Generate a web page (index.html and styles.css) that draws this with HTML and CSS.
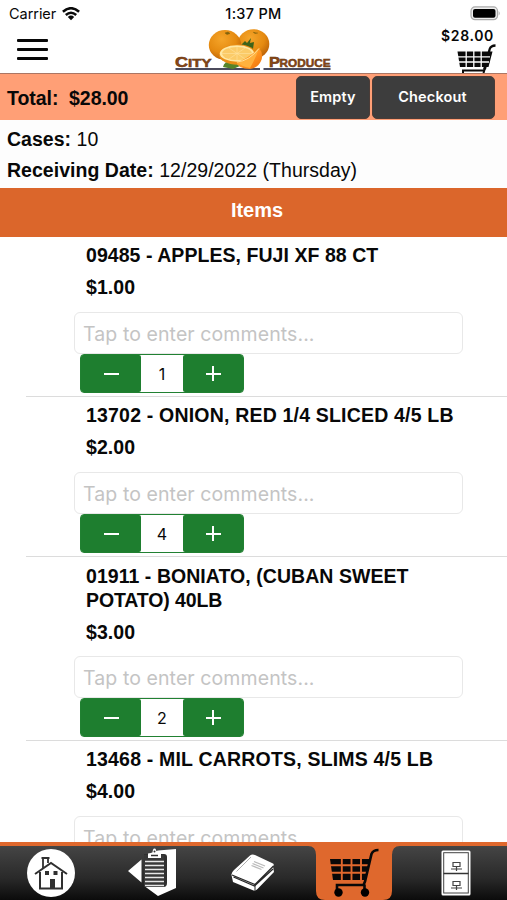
FILE: index.html
```html
<!DOCTYPE html>
<html lang="en">
<head>
<meta charset="utf-8">
<title>City Produce - Cart</title>
<link rel="stylesheet" href="styles.css">
</head>
<body>
<div class="app">
  <div class="status">
    <div class="carrier"><span>Carrier</span>
      <svg width="18" height="14" viewBox="0 0 18 14"><g fill="none" stroke="#0a0a0a" stroke-width="2.5"><path d="M.9 4.8Q9-2.4 17.100 4.800"/><path d="M3.800 8Q9 3.400 14.200 8"/></g><path d="M5.800 10Q9 7.200 12.200 10L9 13.300z" fill="#0a0a0a"/></svg>
    </div>
    <div class="clock">1:37 PM</div>
    <svg class="battery" width="31" height="15" viewBox="0 0 31 15"><rect x="1" y=".9" width="26.500" height="12.800" rx="4" fill="#eee" stroke="#aaa" stroke-width="1.200"/><rect x="3" y="3" width="22.500" height="8.800" rx="2" fill="#000"/><path d="M28.700 5q2 2.300 0 4.600z" fill="#aaa"/></svg>
  </div>
  <header class="header">
    <div class="menu"><i></i><i></i><i></i></div>
    <svg class="logo" width="160" height="46" viewBox="173 27 160 46">
      <defs>
        <radialGradient id="peel" cx=".4" cy=".3" r=".75"><stop offset="0" stop-color="#f5a52a"/><stop offset=".6" stop-color="#e58a10"/><stop offset="1" stop-color="#b65d08"/></radialGradient>
        <linearGradient id="wedge" x1="0" y1="0" x2="1" y2="1"><stop offset="0" stop-color="#ffbd45"/><stop offset=".55" stop-color="#ff9421"/><stop offset="1" stop-color="#ee6f08"/></linearGradient>
      </defs>
      <path d="M175.500 69H260M263.500 69H330.500" stroke="#4b4b5c" stroke-width="1.900"/>
      <ellipse cx="253.500" cy="44" rx="15.800" ry="14.800" fill="url(#peel)"/>
      <ellipse cx="225" cy="45" rx="16.200" ry="15" fill="url(#peel)"/>
      <path d="M225 33l3-1 2 1.500-3 1zM253 32l2 1.500 3-.5" fill="#80620d" stroke="#80620d" stroke-width=".5"/>
      <path d="M242 44l3-3 2 2 4-5-1 5 4-1-1 7-5 4-9-5z" fill="#3e631a"/>
      <path d="M223 67q1-6 9-6l8 5-7 3z" fill="#55842b"/>
      <ellipse cx="237.500" cy="54.500" rx="18.500" ry="10.300" fill="#e98d15"/>
      <ellipse cx="237" cy="53.500" rx="17.200" ry="8.300" fill="#ffe8a4"/>
      <ellipse cx="237" cy="53.500" rx="14.900" ry="6.600" fill="#fbcb68"/>
      <path d="M222 53.500h30M229 48l16 11M245 48l-16 11M237 47v13" stroke="#ffe3a0" stroke-width=".6"/>
      <path d="M236.500 62q10-2 22.500-14 5 6 2 13-3 7-11 8-12 0-13.500-7z" fill="url(#wedge)"/>
      <path d="M237 62q12-1 22-14-4 12-9 20-8-1-13-6z" fill="#ffb13e"/>
      <path d="M237 62q12-1 22-13.500" fill="none" stroke="#ffe09a" stroke-width="1"/>
      <g class="logotype"><text x="175" y="66.500" textLength="13" lengthAdjust="spacingAndGlyphs">C</text><text class="small" x="188" y="66.500" textLength="23.500" lengthAdjust="spacingAndGlyphs">ITY</text><text x="269" y="66.500" textLength="11" lengthAdjust="spacingAndGlyphs">P</text><text class="small" x="279.500" y="66.500" textLength="51" lengthAdjust="spacingAndGlyphs">RODUCE</text></g>
    </svg>
    <div class="cart">
      <span class="amount">$28.00</span>
      <svg width="40" height="29" viewBox="0 0 40 29"><g fill="#0a0a0a"><path d="M1.500 7.500h35l-4 15.500H4z"/><path d="M39.500.3v2.500q-4 0-4.700 2.500L30 25.500h-3L32.600 4.800Q34 .3 39.500.3z"/></g><path d="M10.200 7v17M17.800 7v17M25.200 7v17M0 12.800h34M0 18h33" stroke="#fff" stroke-width="1.300"/><path d="M28 26.500H7v3M29 24l-1.500 5" fill="none" stroke="#0a0a0a" stroke-width="2"/></svg>
    </div>
  </header>
  <section class="total"><b class="sum">Total:&nbsp; $28.00</b><button class="btn empty">Empty</button><button class="btn checkout">Checkout</button></section>
  <section class="info"><p class="cases"><b>Cases:</b> 10</p><p class="date"><b>Receiving Date:</b> 12/29/2022 (Thursday)</p></section>
  <h1 class="heading">Items</h1>
  <main class="list">
    <article class="item"><h2>09485 - APPLES, FUJI XF 88 CT</h2><p class="price">$1.00</p><div class="comment">Tap to enter comments...</div>
      <div class="stepper"><span class="step"><i class="minus"></i></span><span class="qty">1</span><span class="step"><i class="minus"></i><i class="bar"></i></span></div></article>
    <article class="item"><h2 class="wide">13702 - ONION, RED 1/4 SLICED 4/5 LB</h2><p class="price">$2.00</p><div class="comment">Tap to enter comments...</div>
      <div class="stepper"><span class="step"><i class="minus"></i></span><span class="qty">4</span><span class="step"><i class="minus"></i><i class="bar"></i></span></div></article>
    <article class="item tall"><h2>01911 - BONIATO, (CUBAN SWEET<br><span class="tight">POTATO) 40LB</span></h2><p class="price">$3.00</p><div class="comment">Tap to enter comments...</div>
      <div class="stepper"><span class="step"><i class="minus"></i></span><span class="qty">2</span><span class="step"><i class="minus"></i><i class="bar"></i></span></div></article>
    <article class="item"><h2 class="wide">13468 - MIL CARROTS, SLIMS 4/5 LB</h2><p class="price">$4.00</p><div class="comment">Tap to enter comments...</div></article>
  </main>
  <nav class="tabs">
    <a class="tab home"><svg width="50" height="50" viewBox="0 0 50 50"><circle cx="25" cy="25" r="24" fill="#fff"/><path d="M9 26L25 15l16 11M14 24v16.500h22V24" fill="none" stroke="#303030" stroke-width="2"/><path d="M17 20v-10h5v5" fill="none" stroke="#303030" stroke-width="1.800"/><path d="M15.500 9h8v2h-8zM19 23h4v4h-4zM27.500 23h4v4h-4zM24 31h5v9h-5z" fill="#303030"/></svg></a>
    <a class="tab orders"><svg width="52" height="50" viewBox="0 0 52 50"><g fill="#fff"><path d="M2 24L15.500 12.500v23zM32 3.500L50 2v39l-18 8-13-9.500V8z"/></g><path d="M18 7h20q3 0 3 3v26q0 4-3.500 4H18z" fill="#303030"/><path d="M18 8h20v31H18z" fill="#383838"/><path d="M19 14.500h19M19 18.500h19M19 22.500h19M19 26.500h19M19 30.500h19M19 34.500h19M19 38.500h19" stroke="#e8e8e8" stroke-width="1.600"/><path d="M22 11V6.500h4.500q0-5 2-5t2 5H35V11z" fill="#fff"/><path d="M25 8.500h7" stroke="#333" stroke-width="1.500"/><circle cx="28.500" cy="4.500" r="1" fill="#333"/></svg></a>
    <a class="tab catalog"><svg width="46" height="42" viewBox="0 0 46 42"><path d="M1.500 22Q1 20 4 17L20 2.500Q22 1 25 2l18 8.500q1.500 1 0 3L44 19 27.500 36q-2 2-4 1.500L3 29z" fill="#fff"/><path d="M2 22l23 9.500L43.500 13M3.500 24l21 9L43 16" fill="none" stroke="#292929" stroke-width="1.300"/><path d="M25 31v6.500" stroke="#292929"/><path d="M6.500 18.500L21 4" fill="none" stroke="#777" stroke-width=".6"/><path d="M24 8.500l11 4.500M22.500 10.500l11 4.500M21.500 12.500l10 4" stroke="#bbb" stroke-width="1.300"/></svg></a>
    <a class="tab active"><svg class="shape" width="92" height="54" viewBox="0 0 92 54"><path d="M0 0H92Q84 0 84 9V45Q84 54 75 54H17Q8 54 8 45V9Q8 0 0 0z" fill="#df682d"/></svg><svg class="basket" width="50" height="50" viewBox="0 0 50 50"><path d="M0 11h40l-5 21H3z" fill="#080808"/><path d="M11.800 10v23M21.500 10v23M31 10v23M0 17.300h39M0 24.800h37" stroke="#df682d" stroke-width="1.900"/><path d="M48.500 2Q43 2 41.500 6L35 33.500 33.500 37H7V44M34.500 36.500V44" fill="none" stroke="#080808" stroke-width="2.600"/><circle cx="8.500" cy="44.500" r="4.200"/><circle cx="35" cy="44.500" r="4.200"/></svg></a>
    <a class="tab files"><svg width="30" height="46" viewBox="0 0 30 46"><rect x=".5" y=".5" width="29" height="45" rx="1.500" fill="#fff"/><rect x="2.700" y="2.700" width="24.600" height="40.300" fill="none" stroke="#444" stroke-width="1"/><path d="M2.500 23.500h25" stroke="#333" stroke-width="1.500"/><g fill="#fff" stroke="#444" stroke-width="1.200"><path d="M12 12.500h7v4h-7zM10 19h11M15.500 16.500V21M12 31.500h7v4h-7zM10 38h11M15.500 35.500V40"/></g></svg></a>
  </nav>
</div>
</body>
</html>
```
FILE: styles.css
```css
* { box-sizing: border-box; }
body { margin: 0; background: #fff; color: #080808; font-family: "Liberation Sans", sans-serif; }
p, h1, h2 { margin: 0; }
svg { display: block; flex: none; }
.app { width: 507px; height: 900px; overflow: hidden; display: flex; flex-direction: column; }
.status { height: 27px; flex: none; display: grid; grid-template-columns: 1fr auto 1fr; align-items: center; padding: 0 6px 0 9px; font-family: Inter, sans-serif; font-size: 14.5px; }
.carrier { display: flex; align-items: center; gap: 6px; letter-spacing: -.05px; }
.clock { font-weight: 500; letter-spacing: .3px; margin-right: 3px; }
.battery { justify-self: end; }
.header { height: 46px; flex: none; display: flex; padding: 0 11px 0 17px; }
.menu { width: 31px; padding-top: 12px; display: flex; flex-direction: column; gap: 5.500px; }
.menu i { height: 3.300px; background: #080808; border-radius: 1px; }
.logo { margin-left: 125px; }
.logotype { font: bold 14px "Liberation Sans", sans-serif; fill: #8c4815; stroke: #633510; stroke-width: .5px; }
.small { font-size: 11.500px; }
.cart { width: 56px; margin-left: auto; display: flex; flex-direction: column; align-items: flex-end; }
.amount { font: 600 14px/17px Inter, sans-serif; letter-spacing: .65px; white-space: nowrap; margin-right: 2px; }
.total { height: 47px; flex: none; background: #ff9f76; border-top: 1px solid #ab7664; display: flex; align-items: center; padding: 0 12px 0 7px; }
.sum { font-size: 19.500px; flex: 1; padding-top: 2px; letter-spacing: -.05px; }
.btn { border: 1px solid #4b3c37; border-radius: 5px; background: #3d3d3d; color: #fff; height: 43px; padding: 0 0 2px; font: 600 14.500px Inter, sans-serif; letter-spacing: .15px; }
.empty { width: 74px; margin-right: 2px; }
.checkout { width: 123px; padding-right: 2px; }
.info { height: 68px; flex: none; padding: 4px 7px 0; font-size: 19.500px; line-height: 30.500px; background: #fdfdfd; white-space: nowrap; letter-spacing: .03px; }
.heading { height: 49px; flex: none; background: #db662b; color: #fff; text-align: center; font-size: 20px; line-height: 45px; padding-left: 7px; }
.list { flex: 1; min-height: 0; overflow: hidden; }
.item { height: 160px; margin-left: 26px; padding-left: 48px; border-bottom: 1px solid #dcdcdc; }
.item.tall { height: 184px; }
.item h2, .price { margin-left: 12px; font-size: 19.500px; font-weight: bold; white-space: nowrap; line-height: 24px; letter-spacing: .05px; }
.item h2 { padding-top: 6px; }
.item .wide { letter-spacing: .19px; }
.tight { letter-spacing: -.12px; }
.price { margin-top: 8px; }
.comment { width: 389px; height: 42px; margin-top: 13px; border: 1px solid #e8e8e8; border-radius: 6px; padding-left: 8px; line-height: 42px; font-size: 19.500px; letter-spacing: .09px; color: #c4c4c4; font-family: Inter, sans-serif; }
.item.tall h2 { padding-top: 8px; line-height: 23.500px; }
.tall .price { margin-top: 8px; }
.tall .comment { margin-top: 12px; }
.stepper { width: 164px; height: 39px; margin-left: 6px; display: grid; grid-template: 37px / 60px 42px 60px; border: 1px solid #218132; border-radius: 4px; background: #fff; }
.step { background: #1e7e2f; border-radius: 2px; display: grid; place-items: center; }
.step i { grid-area: 1 / 1; background: #fff; }
.minus { width: 15px; height: 2px; }
.bar { width: 2px; height: 15px; }
.qty { text-align: center; line-height: 38px; font-family: Inter, sans-serif; font-size: 16px; }
.tabs { height: 58px; flex: none; border-top: 4px solid #df682d; background: linear-gradient(#454545, #292929 60%, #0b0b0b); display: grid; grid-template-columns: 101px 101px 102px 101px 102px; }
.tab { display: flex; justify-content: center; align-items: flex-start; padding-top: 2px; position: relative; }
.orders { padding-top: 1px; }
.catalog { padding-top: 7px; }
.files { padding-top: 4px; }
.shape { position: absolute; left: 4px; top: 0; }
.basket { position: relative; }
```
